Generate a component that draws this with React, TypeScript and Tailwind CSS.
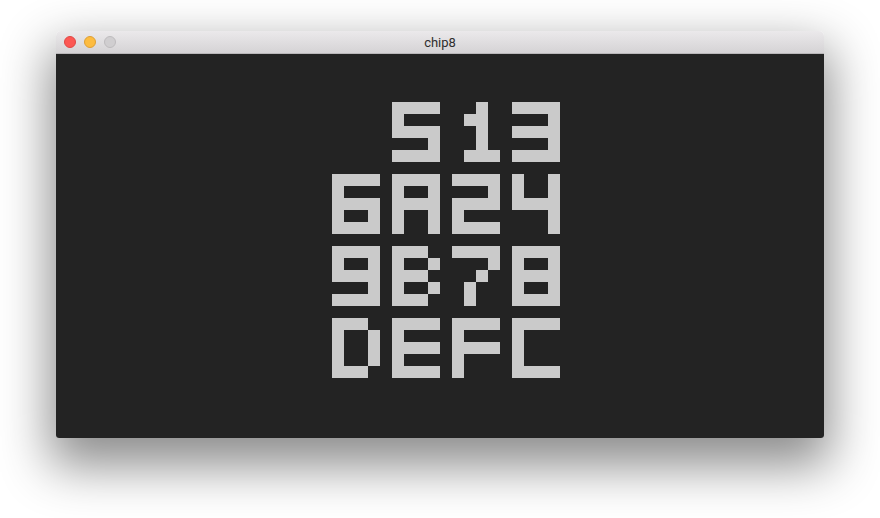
import React from "react";

const FONT: Record<string, number[]> = {
  "0": [0xf0, 0x90, 0x90, 0x90, 0xf0],
  "1": [0x20, 0x60, 0x20, 0x20, 0x70],
  "2": [0xf0, 0x10, 0xf0, 0x80, 0xf0],
  "3": [0xf0, 0x10, 0xf0, 0x10, 0xf0],
  "4": [0x90, 0x90, 0xf0, 0x10, 0x10],
  "5": [0xf0, 0x80, 0xf0, 0x10, 0xf0],
  "6": [0xf0, 0x80, 0xf0, 0x90, 0xf0],
  "7": [0xf0, 0x10, 0x20, 0x40, 0x40],
  "8": [0xf0, 0x90, 0xf0, 0x90, 0xf0],
  "9": [0xf0, 0x90, 0xf0, 0x10, 0xf0],
  A: [0xf0, 0x90, 0xf0, 0x90, 0x90],
  B: [0xe0, 0x90, 0xe0, 0x90, 0xe0],
  C: [0xf0, 0x80, 0x80, 0x80, 0xf0],
  D: [0xe0, 0x90, 0x90, 0x90, 0xe0],
  E: [0xf0, 0x80, 0xf0, 0x80, 0xf0],
  F: [0xf0, 0x80, 0xf0, 0x80, 0x80],
};

const LAYOUT = [" 513", "6A24", "9B78", "DEFC"];
const P = 12;

function Screen() {
  const rects: React.ReactElement[] = [];
  LAYOUT.forEach((row, r) => {
    row.split("").forEach((ch, c) => {
      const g = FONT[ch];
      if (!g) return;
      const ox = 23 + c * 5;
      const oy = 4 + r * 6;
      g.forEach((bits, y) => {
        for (let x = 0; x < 4; x++) {
          if (bits & (0x80 >> x)) {
            rects.push(
              <rect
                key={`${r}-${c}-${x}-${y}`}
                x={(ox + x) * P}
                y={(oy + y) * P}
                width={P}
                height={P}
                fill="#cacaca"
              />
            );
          }
        }
      });
    });
  });
  return (
    <svg width={768} height={384} viewBox="0 0 768 384" shapeRendering="crispEdges" className="block">
      <rect x={0} y={0} width={768} height={384} fill="#232323" />
      {rects}
    </svg>
  );
}

export default function App() {
  return (
    <div className="w-[880px] h-[518px] bg-white overflow-hidden pl-[56px] pt-[31px]">
      <div className="w-[768px] rounded-t-[5px] rounded-b-[3px] shadow-[0_22px_50px_6px_rgba(0,0,0,0.45)] overflow-hidden">
        <div className="relative h-[23px] bg-gradient-to-b from-[#ebe9eb] to-[#d5d3d5] border-b border-[#b9b7b9] flex items-center justify-center">
          <div className="absolute left-[8px] top-[5px] flex gap-[8px]">
            <div className="w-[12px] h-[12px] rounded-full bg-[#fc5753] border border-[#df4744]" />
            <div className="w-[12px] h-[12px] rounded-full bg-[#fdbc40] border border-[#de9f34]" />
            <div className="w-[12px] h-[12px] rounded-full bg-[#d0ced0] border border-[#bdbbbd]" />
          </div>
          <span className="text-[13px] leading-none text-[#2e2e2e] font-['Roboto','Liberation_Sans',sans-serif]">
            chip8
          </span>
        </div>
        <Screen />
      </div>
    </div>
  );
}
